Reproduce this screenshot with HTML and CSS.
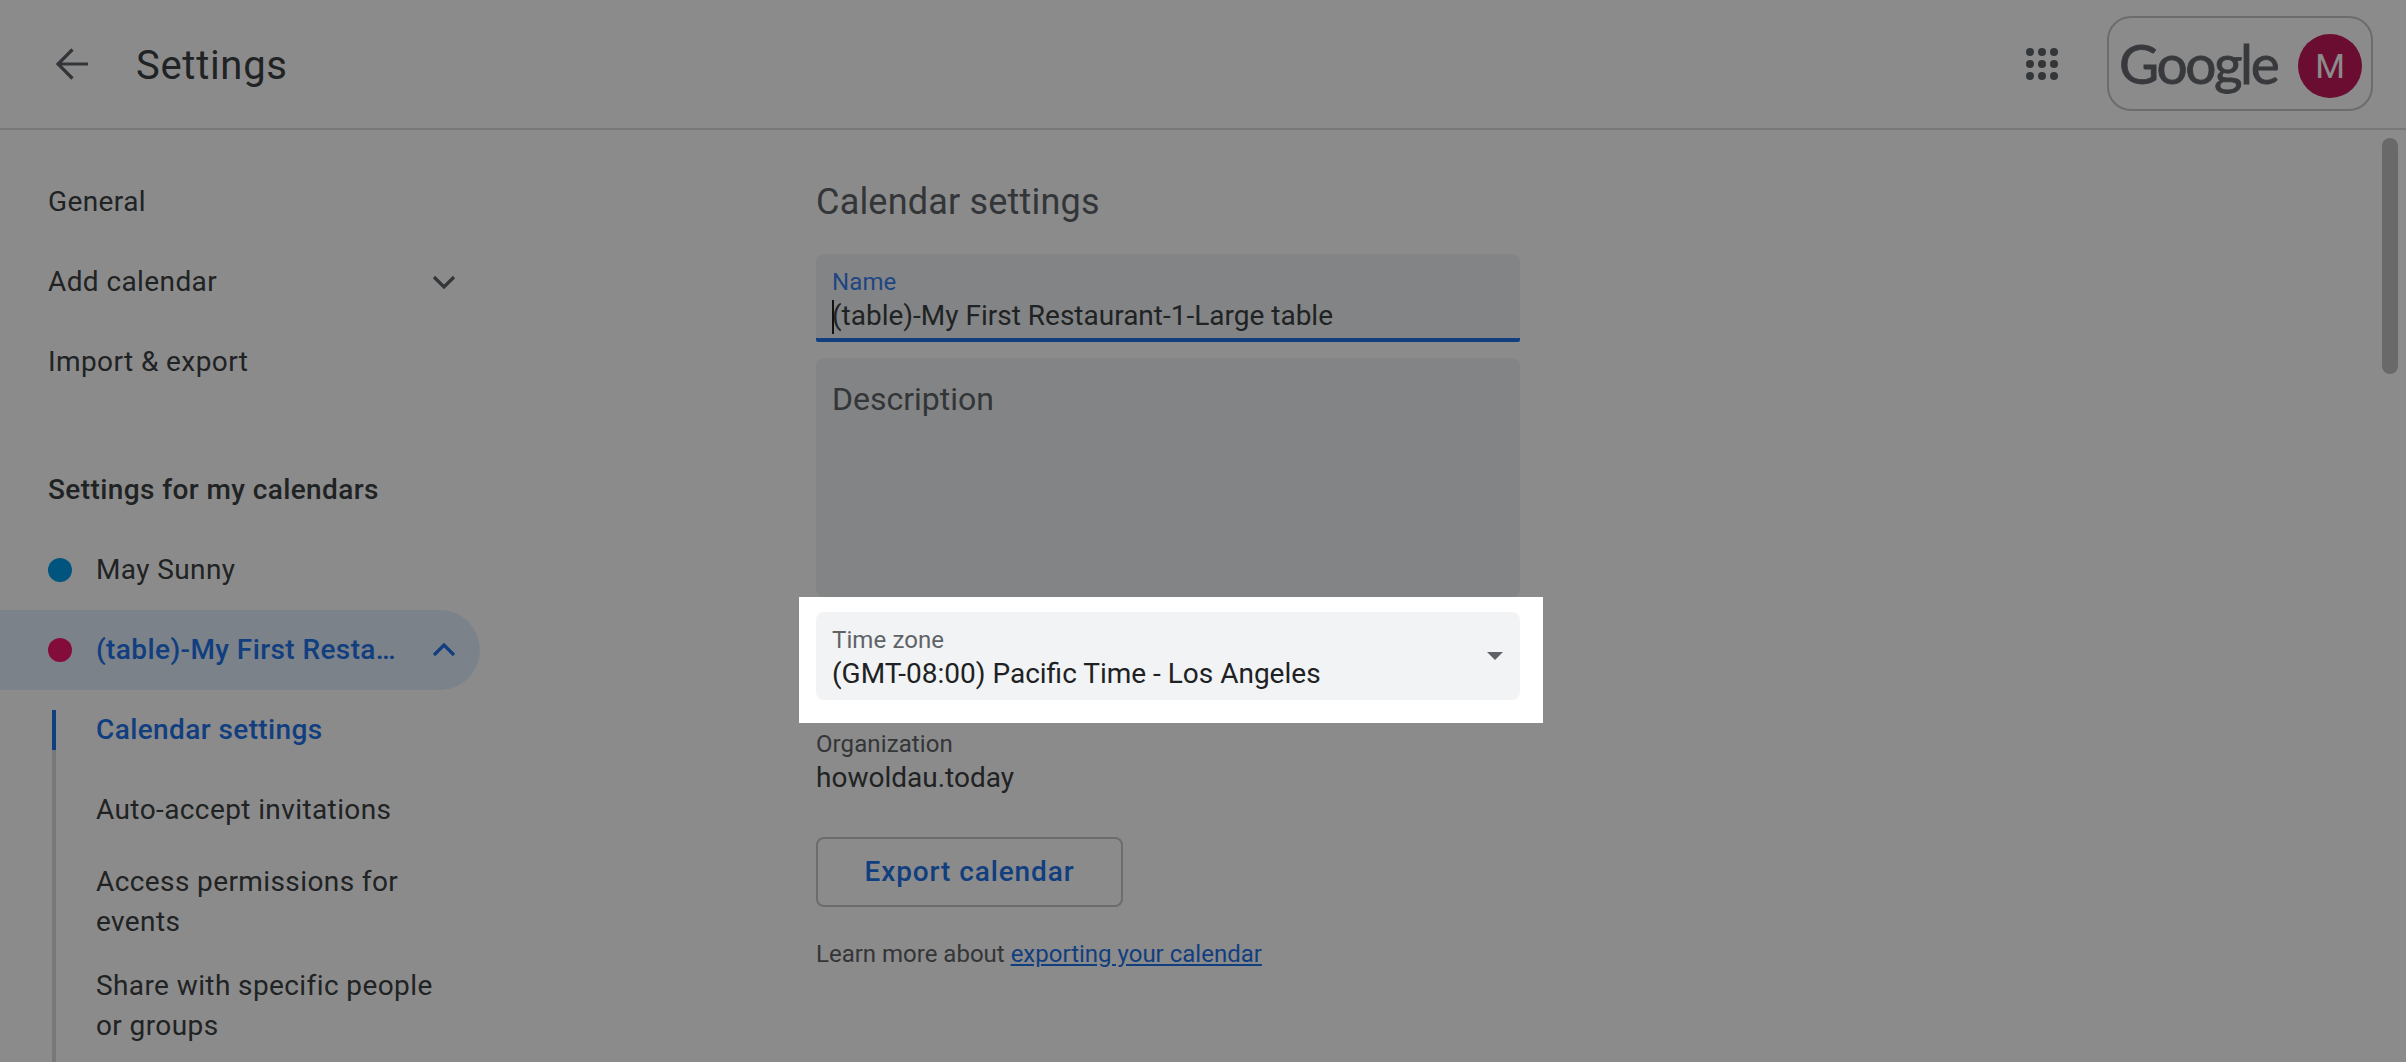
FILE: index.html
```html
<!DOCTYPE html>
<html lang="en">
<head>
<meta charset="utf-8">
<title>Settings</title>
<link rel="stylesheet" href="styles.css">
</head>
<body>
<div class="app">
  <div class="scroll-thumb"></div>
  <header class="topbar">
    <svg class="back" width="48" height="48" viewBox="0 0 48 48" aria-hidden="true"><path d="M11 25H40M24.5 10.5 10 25l14.5 14.5" fill="none" stroke="currentColor" stroke-width="3.2"/></svg>
    <h1 class="page-title">Settings</h1>
    <svg class="apps" width="36" height="36" viewBox="0 0 36 36" aria-hidden="true">
      <g fill="currentColor">
        <circle cx="6" cy="6" r="4"/><circle cx="18" cy="6" r="4"/><circle cx="30" cy="6" r="4"/>
        <circle cx="6" cy="18" r="4"/><circle cx="18" cy="18" r="4"/><circle cx="30" cy="18" r="4"/>
        <circle cx="6" cy="30" r="4"/><circle cx="18" cy="30" r="4"/><circle cx="30" cy="30" r="4"/>
      </g>
    </svg>
    <div class="account">
      <span class="wordmark">Google</span>
      <span class="avatar">M</span>
    </div>
  </header>
  <div class="body">
    <nav class="sidebar">
      <div class="nav-row">General</div>
      <div class="nav-row nav-between">Add calendar
        <svg class="chev" width="24" height="14" viewBox="0 0 24 14" aria-hidden="true"><path d="M2 2l10 10L22 2" fill="none" stroke="currentColor" stroke-width="3.2"/></svg>
      </div>
      <div class="nav-row">Import &amp; export</div>
      <div class="nav-heading">Settings for my calendars</div>
      <div class="nav-row cal-row"><span class="dot dot-blue"></span>May Sunny</div>
      <div class="nav-row cal-row cal-open"><span class="dot dot-red"></span><span class="cal-name">(table)-My First Resta…</span>
        <svg class="chev" width="24" height="14" viewBox="0 0 24 14" aria-hidden="true"><path d="M2 12L12 2l10 10" fill="none" stroke="currentColor" stroke-width="3.2"/></svg>
      </div>
      <div class="sublist">
        <div class="sub-item sub-active">Calendar settings</div>
        <div class="sub-item sub-auto">Auto-accept invitations</div>
        <div class="sub-item sub-multi">Access permissions for events</div>
        <div class="sub-item sub-multi sub-last">Share with specific people or groups</div>
      </div>
    </nav>
    <main class="main">
      <h2 class="section-title">Calendar settings</h2>
      <div class="field field-focus">
        <div class="field-label">Name</div>
        <div class="field-value"><span class="caret"></span>(table)-My First Restaurant-1-Large table</div>
      </div>
      <div class="field-area">Description</div>
      <div class="field field-select spotlight">
        <div>
          <div class="field-label">Time zone</div>
          <div class="field-value">(GMT-08:00) Pacific Time - Los Angeles</div>
        </div>
        <svg class="select-arrow" width="16" height="8" viewBox="0 0 16 8" aria-hidden="true"><path d="M0 0h16L8 8z" fill="currentColor"/></svg>
      </div>
      <div class="org-label">Organization</div>
      <div class="org-value">howoldau.today</div>
      <button class="export" type="button">Export calendar</button>
      <p class="learn">Learn more about <a href="#">exporting your calendar</a></p>
    </main>
  </div>
</div>
</body>
</html>
```

FILE: styles.css
```css
* { box-sizing: border-box; }
html, body { margin: 0; height: 100%; overflow: hidden; background: #fff; }
body { font-family: Roboto, "Noto Sans", sans-serif; color: #3c4043; }

.app { position: relative; height: 1062px; overflow: hidden; display: flex; flex-direction: column; }

.topbar {
  flex: none; height: 130px; display: flex; align-items: center;
  border-bottom: 2px solid #dadce0; padding: 0 33px 2px 48px;
}
.back { flex: none; color: #5f6368; }
.page-title {
  margin: 5px 0 0 40px; font: 400 40px/48px Roboto, sans-serif; letter-spacing: .7px; color: #3c4043; flex: 1;
}
.apps { flex: none; color: #5f6368; margin: 2px 47px 0 0; }
.account {
  flex: none; width: 266px; height: 95px; border: 2px solid #c4c6c9; border-radius: 24px;
  display: flex; align-items: center; justify-content: space-between; padding: 0 9px 0 10px;
}
.wordmark {
  font: 400 55px/64px Lato, sans-serif; letter-spacing: -2.4px; color: #666a6f;
  -webkit-text-stroke: .8px #666a6f; margin-top: -1px;
}
.avatar {
  width: 64px; height: 64px; border-radius: 50%; background: #c2185b; color: #fff; margin-top: 5px;
  display: flex; align-items: center; justify-content: center; font: 400 34px/1 Roboto, sans-serif;
}

.body { flex: 1; display: flex; min-height: 0; }

.sidebar { flex: none; width: 816px; padding-top: 32px; font-size: 28px; line-height: 40px; letter-spacing: .4px; color: #3c4043; }
.nav-row { display: flex; align-items: center; height: 80px; width: 480px; padding: 0 24px 0 48px; }
.nav-between { justify-content: space-between; }
.nav-heading { margin-top: 50px; height: 78px; padding: 18px 48px 0; font-weight: 500; color: #3c4043; }
.chev { flex: none; color: #5f6368; }
.cal-row { gap: 24px; padding-left: 48px; }
.dot { flex: none; width: 24px; height: 24px; border-radius: 50%; }
.dot-blue { background: #039be5; }
.dot-red { background: #f0176c; }
.cal-open { background: #e2eefc; border-radius: 0 40px 40px 0; color: #1f73ea; font-weight: 500; }
.cal-name { flex: 1; white-space: nowrap; overflow: hidden; }
.cal-open .chev { color: #1f73ea; }

.sublist { margin: 20px 0 0 52px; width: 428px; padding: 0 24px 0 40px; border-left: 4px solid #dadce0; }
.sub-item { position: relative; padding-bottom: 40px; }
.sub-active { color: #1f73ea; font-weight: 500; }
.sub-active::before {
  content: ""; position: absolute; left: -44px; top: 0; width: 4px; height: 40px; background: #1f73ea;
}
.sub-auto { padding-bottom: 20px; }
.sub-multi { margin-top: 12px; padding-bottom: 12px; }
.sub-last { padding-bottom: 80px; }

.main { flex: 1; padding-top: 48px; width: 704px; min-width: 0; }
.section-title { margin: 0 0 28px; font: 400 36px/48px Roboto, sans-serif; letter-spacing: .2px; color: #5f6368; }
.field { width: 704px; height: 88px; background: #f1f3f4; border-radius: 8px; padding: 12px 16px 0; }
.field-focus { border-radius: 8px 8px 2px 2px; border-bottom: 4px solid #1f73ea; }
.field-label { font-size: 24px; line-height: 32px; color: #5f6368; letter-spacing: .1px; }
.field-focus .field-label { color: #3c7ff0; }
.field-value { font-size: 28px; line-height: 36px; color: #202124; white-space: nowrap; position: relative; }
.field-focus .field-value { color: #3c4043; }
.caret { position: absolute; left: 0; top: 2px; width: 2px; height: 34px; background: #202124; }
.field-area {
  width: 704px; height: 239px; margin-top: 16px; background: #f1f3f4; border-radius: 8px;
  padding: 21px 16px 0; font-size: 32px; line-height: 40px; color: #5f6368;
}
.field-select { margin-top: 15px; display: flex; align-items: flex-start; justify-content: space-between; }
.select-arrow { flex: none; color: #5f6368; margin: 28px 1px 0 0; }

.spotlight { position: relative; }
.spotlight::after {
  content: ""; position: absolute; top: -15px; right: -23px; bottom: -23px; left: -17px;
  box-shadow: 0 0 0 3000px rgba(0,0,0,.455); pointer-events: none;
}

.org-label { margin-top: 28px; font-size: 24px; line-height: 32px; color: #5f6368; letter-spacing: .1px; }
.org-value { font-size: 28px; line-height: 36px; color: #3c4043; }
.export {
  display: block; margin-top: 41px; width: 307px; height: 70px; background: none;
  border: 2px solid #c4c6c9; border-radius: 8px; font: 500 28px/1 Roboto, sans-serif; color: #1f73ea; letter-spacing: .9px; padding: 0;
}
.learn { margin: 31px 0 0; font-size: 24px; line-height: 32px; color: #5f6368; }
.learn a { color: #1f73ea; }

.scroll-thumb { position: absolute; left: 2382px; top: 138px; width: 16px; height: 236px; border-radius: 8px; background: #c1c1c1; }
```
